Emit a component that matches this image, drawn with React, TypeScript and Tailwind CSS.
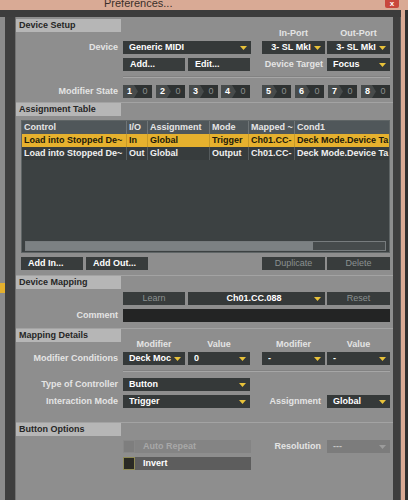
import React from "react";

const Arrow = ({ color = "#e8c23a" }: { color?: string }) => (
    <svg width="7" height="4" viewBox="0 0 7 4" className="shrink-0">
        <path d="M0 0h7L3.5 4z" fill={color} />
    </svg>
);

const Drop = ({ text, className = "", center = false }: { text: string; className?: string; center?: boolean }) => (
    <div className={`h-full bg-[#353939] flex items-center pl-[6px] pr-[4px] text-white ${className}`}>
        <span className={`flex-1 overflow-hidden whitespace-nowrap ${center ? "text-center" : ""}`}>{text}</span>
        <Arrow />
    </div>
);

const Btn = ({ text, className = "", disabled = false, center = false }: { text: string; className?: string; disabled?: boolean; center?: boolean }) => (
    <div
        className={`h-full bg-[#383c3c] flex items-center whitespace-nowrap ${center ? "justify-center" : "pl-[7px]"} ${disabled ? "text-[#8b9191] font-normal" : "text-white"} ${className}`}
    >
        {text}
    </div>
);

const SectionHead = ({ title, first = false }: { title: string; first?: boolean }) => (
    <div className={first ? "mt-[2px]" : "border-t border-[#a3a3a3]"}>
        <div className="w-[105px] h-[13px] bg-[#b6b6b6] text-[#262626] pl-[3px] leading-[13px]">{title}</div>
    </div>
);

const Row = ({ label, className = "", children }: { label?: string; className?: string; children?: React.ReactNode }) => (
    <div className={`flex h-[13px] ${className}`}>
        <div className="w-[102px] text-right text-[#e4e4e4] leading-[13px] whitespace-nowrap">{label}</div>
        <div className="ml-[5px] w-[267px] flex h-full">{children}</div>
    </div>
);

const ModBtn = ({ n, className = "" }: { n: number; className?: string }) => (
    <div className={`w-[29px] h-full bg-[#2e3232] flex items-center ${className}`}>
        <span className="w-[15px] h-full bg-[#474b4b] text-white flex items-center pl-[4px] [clip-path:polygon(0_0,11px_0,15px_50%,11px_100%,0_100%)]">
            {n}
        </span>
        <span className="flex-1 text-center text-[#8c9090] font-normal">0</span>
    </div>
);

const cols = ["w-[105px]", "w-[21px]", "w-[62px]", "w-[39px]", "w-[46px]", "flex-1"];

const TRow = ({ cells, className, sep }: { cells: string[]; className: string; sep: string }) => (
    <div className={`flex h-[13px] leading-[13px] ${className}`}>
        {cells.map((c, i) => (
            <div
                key={i}
                className={`${cols[i]} overflow-hidden whitespace-nowrap pl-[2px] ${i < cells.length - 1 ? `border-r ${sep}` : ""}`}
            >
                {c}
            </div>
        ))}
    </div>
);

export default function App() {
    return (
        <div className="w-[408px] h-[500px] overflow-hidden flex flex-col bg-[#3c3c3c] font-['Liberation_Sans',Arial,sans-serif] text-[9px] font-bold">
            {/* title bar */}
            <div className="h-[10px] shrink-0 bg-[#d9aa95] flex overflow-hidden">
                <div className="w-[104px]" />
                <div className="-mt-[3px] text-[11px] font-normal text-[#3a2f2a] leading-[13px]">Preferences...</div>
                <div className="flex-1" />
                <div className="w-[14px] h-[8px] bg-[#c8473c] rounded-b-[2px] text-white text-[8px] leading-[7px] text-center">x</div>
                <div className="w-[9px]" />
            </div>

            <div className="flex flex-1 min-h-0">
                <div className="w-[401px] flex flex-col">
                    <div className="h-[7px] bg-[#3c3c3c]" />
                    <div className="flex flex-1 min-h-0">
                        <div className="w-[5px] bg-[#8b8b8b] flex flex-col">
                            <div className="h-[266px]" />
                            <div className="h-[10px] bg-[#e4b02e]" />
                        </div>
                        <div className="w-[10px] bg-[#3e3e3e]" />
                        <div className="w-[1px] bg-[#727272]" />

                        {/* content panel */}
                        <div className="w-[377px] bg-[#8e8e8e] flex flex-col">
                            <SectionHead title="Device Setup" first />
                            <div className="-mt-[4px] h-[11px] flex text-[#e4e4e4] leading-[11px]">
                                <div className="w-[246px]" />
                                <div className="w-[63px] text-center">In-Port</div>
                                <div className="w-[2px]" />
                                <div className="w-[63px] text-center">Out-Port</div>
                            </div>
                            <Row label="Device" className="mt-[2px]">
                                <Drop text="Generic MIDI" className="w-[128px]" />
                                <div className="w-[11px]" />
                                <Drop text="3- SL MkI" className="w-[63px]" center />
                                <div className="w-[2px]" />
                                <Drop text="3- SL MkI" className="w-[63px]" center />
                            </Row>
                            <Row className="mt-[4px]">
                                <Btn text="Add..." className="w-[62px]" />
                                <div className="w-[3px]" />
                                <Btn text="Edit..." className="w-[62px]" />
                                <div className="flex-1 text-right pr-[4px] text-[#e4e4e4] leading-[13px] whitespace-nowrap">Device Target</div>
                                <Drop text="Focus" className="w-[63px]" />
                            </Row>
                            <div className="mt-[5px] ml-[107px] w-[267px] h-[2px] border-t border-[#828282] bg-[#a6a6a6]" />
                            <Row label="Modifier State" className="mt-[7px]">
                                <ModBtn n={1} />
                                <ModBtn n={2} className="ml-[4px]" />
                                <ModBtn n={3} className="ml-[4px]" />
                                <ModBtn n={4} className="ml-[3px]" />
                                <ModBtn n={5} className="ml-[12px]" />
                                <ModBtn n={6} className="ml-[4px]" />
                                <ModBtn n={7} className="ml-[4px]" />
                                <ModBtn n={8} className="ml-[4px]" />
                            </Row>

                            <div className="mt-[4px]" />
                            <SectionHead title="Assignment Table" />
                            <div className="mt-[4px] ml-[5px] w-[369px] h-[133px] border border-[#5f6566] bg-[#3c4142] flex flex-col">
                                <TRow
                                    cells={["Control", "I/O", "Assignment", "Mode", "Mapped ~", "Cond1"]}
                                    className="bg-[#50575a] text-[#e6e6e6] h-[12px] leading-[12px]"
                                    sep="border-[#6f7577]"
                                />
                                <TRow
                                    cells={["Load into Stopped De~", "In", "Global", "Trigger", "Ch01.CC-", "Deck Mode.Device Ta"]}
                                    className="bg-[#e6b12e] text-[#21190a]"
                                    sep="border-[#c79a28]"
                                />
                                <TRow
                                    cells={["Load into Stopped De~", "Out", "Global", "Output", "Ch01.CC-", "Deck Mode.Device Ta"]}
                                    className="bg-[#373c3d] text-[#f0f0f0]"
                                    sep="border-[#555b5d]"
                                />
                                <div className="flex-1" />
                                <div className="h-[10px] mx-[3px] mb-[1px] flex border border-[#777c7e]">
                                    <div className="w-[287px] bg-[#7c8183]" />
                                    <div className="flex-1 bg-[#464b4c]" />
                                </div>
                            </div>
                            <div className="mt-[4px] ml-[5px] w-[369px] h-[13px] flex">
                                <Btn text="Add In..." className="w-[62px]" />
                                <div className="w-[3px]" />
                                <Btn text="Add Out..." className="w-[62px]" />
                                <div className="flex-1" />
                                <Btn text="Duplicate" className="w-[63px]" disabled center />
                                <div className="w-[2px]" />
                                <Btn text="Delete" className="w-[63px]" disabled center />
                            </div>

                            <div className="mt-[5px]" />
                            <SectionHead title="Device Mapping" />
                            <Row className="mt-[3px]">
                                <Btn text="Learn" className="w-[62px]" disabled center />
                                <div className="w-[3px]" />
                                <Drop text="Ch01.CC.088" className="w-[137px]" center />
                                <div className="w-[2px]" />
                                <Btn text="Reset" className="w-[63px]" disabled center />
                            </Row>
                            <Row label="Comment" className="mt-[4px]">
                                <div className="w-full h-full bg-[#232424]" />
                            </Row>

                            <div className="mt-[6px]" />
                            <SectionHead title="Mapping Details" />
                            <div className="-mt-[3px] h-[10px] flex text-[#e4e4e4] leading-[10px]">
                                <div className="w-[107px]" />
                                <div className="w-[62px] text-center">Modifier</div>
                                <div className="w-[3px]" />
                                <div className="w-[62px] text-center">Value</div>
                                <div className="w-[12px]" />
                                <div className="w-[63px] text-center">Modifier</div>
                                <div className="w-[2px]" />
                                <div className="w-[63px] text-center">Value</div>
                            </div>
                            <Row label="Modifier Conditions" className="mt-[3px]">
                                <Drop text="Deck Moc" className="w-[62px]" />
                                <div className="w-[3px]" />
                                <Drop text="0" className="w-[62px]" />
                                <div className="w-[12px]" />
                                <Drop text="-" className="w-[63px]" />
                                <div className="w-[2px]" />
                                <Drop text="-" className="w-[63px]" />
                            </Row>
                            <div className="mt-[5px] ml-[107px] w-[267px] h-[2px] border-t border-[#828282] bg-[#a6a6a6]" />
                            <Row label="Type of Controller" className="mt-[6px]">
                                <Drop text="Button" className="w-[127px]" />
                            </Row>
                            <Row label="Interaction Mode" className="mt-[4px]">
                                <Drop text="Trigger" className="w-[127px]" />
                                <div className="flex-1 text-right pr-[6px] text-[#e4e4e4] leading-[13px]">Assignment</div>
                                <Drop text="Global" className="w-[63px]" />
                            </Row>

                            <div className="mt-[14px]" />
                            <SectionHead title="Button Options" />
                            <Row className="mt-[4px]">
                                <div className="w-[12px] h-full bg-[#7e7e7e] border border-[#888888]" />
                                <div className="w-[116px] h-full bg-[#848484] text-[#a8a8a8] pl-[8px] leading-[13px]">Auto Repeat</div>
                                <div className="flex-1 text-right pr-[6px] text-[#e4e4e4] leading-[13px]">Resolution</div>
                                <div className="w-[63px] h-full bg-[#7c7c7c] flex items-center pl-[6px] pr-[4px] text-[#c4c4c4]">
                                    <span className="flex-1">---</span>
                                    <Arrow color="#9c9c9c" />
                                </div>
                            </Row>
                            <Row className="mt-[4px]">
                                <div className="w-[12px] h-full bg-[#2a2a24] border border-[#8e8a55]" />
                                <div className="w-[116px] h-full bg-[#5d5d5d] text-white pl-[8px] leading-[13px]">Invert</div>
                            </Row>
                        </div>

                        <div className="w-[8px] bg-[#3e3e3e] border-r border-[#5a5a5a]" />
                    </div>
                </div>
                <div className="w-[4px] bg-[#d9aa95]" />
                <div className="w-[3px] bg-[#2e2e2e]" />
            </div>
        </div>
    );
}
